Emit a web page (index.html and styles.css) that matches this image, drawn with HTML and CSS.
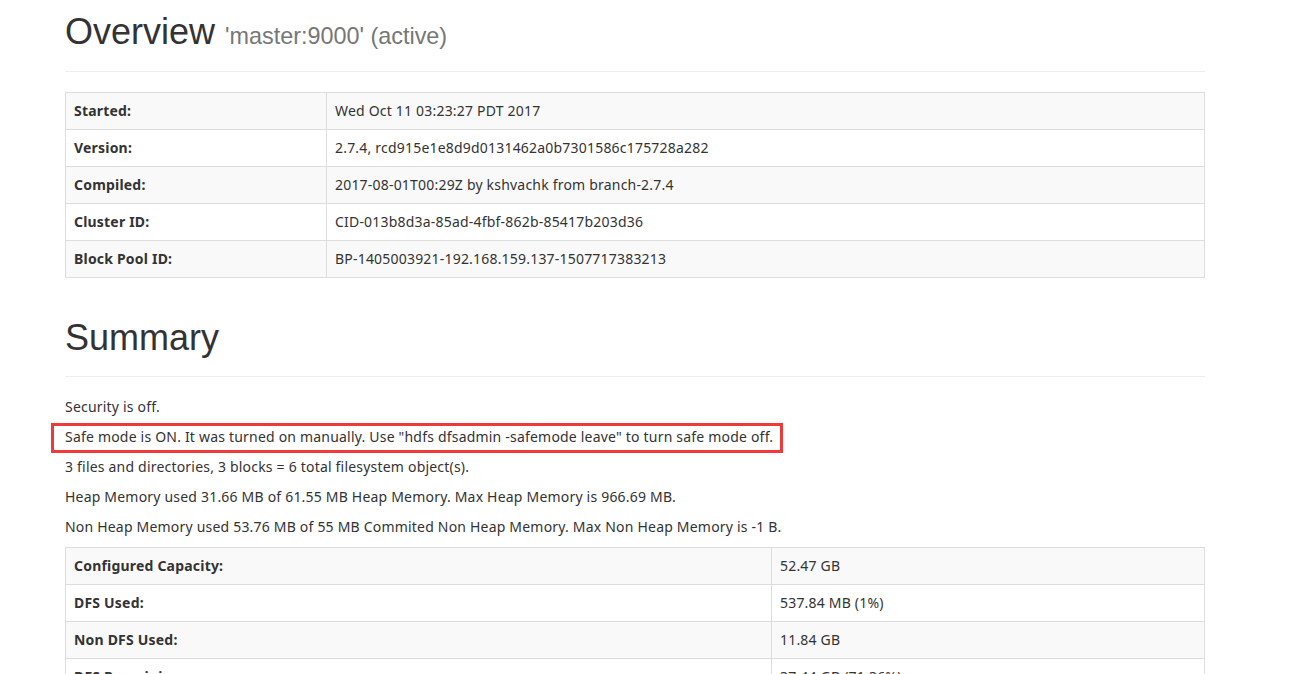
FILE: index.html
```html
<!DOCTYPE html>
<html>
<head>
<meta charset="utf-8">
<link rel="stylesheet" href="styles.css">
</head>
<body>
<div class="container">
  <div class="page-header first">
    <h1>Overview <small>'master:9000' (active)</small></h1>
  </div>
  <table class="table table-kv">
    <tr><th>Started:</th><td>Wed Oct 11 03:23:27 PDT 2017</td></tr>
    <tr><th>Version:</th><td>2.7.4, rcd915e1e8d9d0131462a0b7301586c175728a282</td></tr>
    <tr><th>Compiled:</th><td>2017-08-01T00:29Z by kshvachk from branch-2.7.4</td></tr>
    <tr><th>Cluster ID:</th><td>CID-013b8d3a-85ad-4fbf-862b-85417b203d36</td></tr>
    <tr><th>Block Pool ID:</th><td>BP-1405003921-192.168.159.137-1507717383213</td></tr>
  </table>

  <div class="page-header">
    <h1>Summary</h1>
  </div>
  <p>Security is off.</p>
  <p class="highlight">Safe mode is ON. It was turned on manually. Use "hdfs dfsadmin -safemode leave" to turn safe mode off.<span class="mark"></span></p>
  <p>3 files and directories, 3 blocks = 6 total filesystem object(s).</p>
  <p>Heap Memory used 31.66 MB of 61.55 MB Heap Memory. Max Heap Memory is 966.69 MB.</p>
  <p>Non Heap Memory used 53.76 MB of 55 MB Commited Non Heap Memory. Max Non Heap Memory is -1 B.</p>
  <table class="table table-summary">
    <tr><th>Configured Capacity:</th><td>52.47 GB</td></tr>
    <tr><th>DFS Used:</th><td>537.84 MB (1%)</td></tr>
    <tr><th>Non DFS Used:</th><td>11.84 GB</td></tr>
    <tr><th>DFS Remaining:</th><td>37.44 GB (71.36%)</td></tr>
  </table>
</div>
</body>
</html>
```

FILE: styles.css
```css
html, body {
  margin: 0;
  padding: 0;
  background: #fff;
}
body {
  font-family: "Noto Sans", "Open Sans", sans-serif;
  font-size: 14px;
  line-height: 20px;
  letter-spacing: 0.2px;
  color: #333;
  overflow: hidden;
  height: 674px;
}
.container {
  width: 1140px;
  margin-left: 65px;
  padding-top: 1px;
}
.page-header {
  margin: 40px 0 20px;
  padding-bottom: 9px;
  border-bottom: 1px solid #eee;
}
.page-header.first {
  margin-top: 11px;
}
.page-header.first h1 {
  margin-top: 0;
}
h1 {
  font-family: "Liberation Sans", Arial, sans-serif;
  font-weight: 500;
  font-size: 36px;
  line-height: 1.1;
  letter-spacing: 0;
  margin: 20px 0 10px;
  color: #333;
}
h1 small {
  font-size: 65%;
  font-weight: 400;
  color: #777;
}
p {
  margin: 0 0 10px;
}
.highlight {
  position: relative;
}
.mark {
  position: absolute;
  left: -14px;
  top: -4px;
  width: 726px;
  height: 24px;
  border: 3px solid #f03a3a;
}
.table {
  width: 100%;
  border-collapse: collapse;
  border-spacing: 0;
  margin-bottom: 20px;
  border: 1px solid #ddd;
}
.table th, .table td {
  padding: 8px;
  line-height: 20px;
  text-align: left;
  vertical-align: top;
  border: 1px solid #ddd;
}
.table th {
  font-weight: bold;
}
.table tr:nth-child(odd) {
  background: #f9f9f9;
}
.table-kv th {
  width: 244px;
}
.table-summary th {
  width: 689px;
}
```
